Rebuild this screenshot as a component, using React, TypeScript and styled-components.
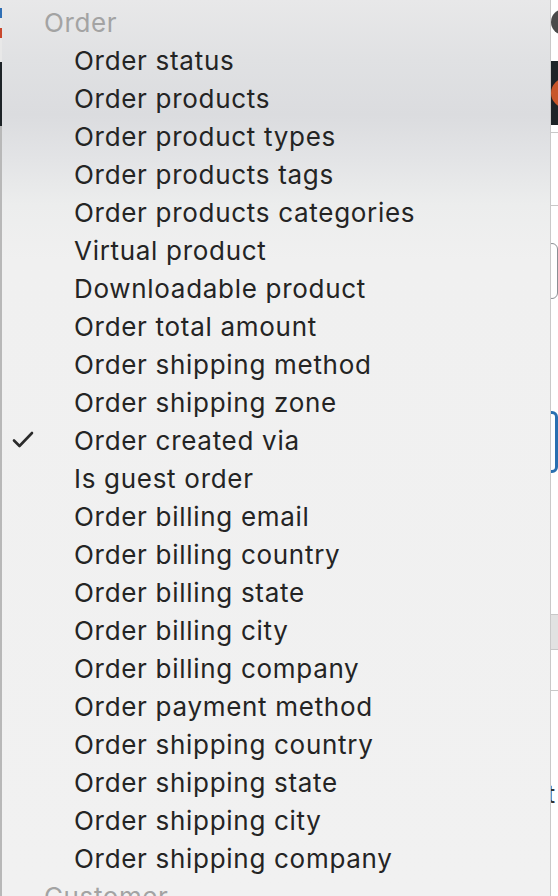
import React from 'react';
import styled, { createGlobalStyle } from 'styled-components';

const GlobalStyle = createGlobalStyle`
  html, body {
    margin: 0;
    padding: 0;
    background: #ffffff;
    overflow: hidden;
  }
`;

const Screen = styled.div`
  display: flex;
  width: 558px;
  height: 896px;
  overflow: hidden;
  font-family: Inter, "Noto Sans", "Liberation Sans", sans-serif;
`;

const LeftEdge = styled.div`
  width: 2px;
  flex: none;
  display: flex;
  flex-direction: column;
  background: #b8b8b8;
`;

const EdgeBit = styled.div<{ h: number; color: string }>`
  height: ${({ h }) => h}px;
  background: ${({ color }) => color};
  flex: none;
`;

const Menu = styled.div`
  width: 549px;
  flex: none;
  display: flex;
  flex-direction: column;
  padding-top: 3px;
  box-sizing: border-box;
  border-right: 1px solid #c9c9c9;
  background: linear-gradient(
    180deg,
    #e8e8e9 0px,
    #e0e1e3 60px,
    #dbdcdf 115px,
    #e3e4e6 160px,
    #eceded 205px,
    #f0f0f0 260px,
    #f1f1f1 100%
  );
`;

const GroupLabel = styled.div`
  height: 38px;
  display: flex;
  align-items: center;
  padding-left: 42px;
  font-size: 26px;
  letter-spacing: 0.6px;
  color: #a3a3a3;
  flex: none;
  white-space: nowrap;
`;

const Option = styled.div`
  height: 38px;
  display: flex;
  align-items: center;
  flex: none;
  font-size: 26px;
  letter-spacing: 0.7px;
  color: #242424;
  white-space: nowrap;
`;

const CheckSlot = styled.div`
  width: 72px;
  display: flex;
  justify-content: flex-start;
  padding-left: 10px;
  box-sizing: border-box;
  flex: none;
`;

const RightEdge = styled.div`
  flex: 1;
  display: flex;
  flex-direction: column;
  background: #ffffff;
  overflow: hidden;
`;

const Dot = styled.div`
  width: 26px;
  height: 26px;
  margin-top: 9px;
  border-radius: 50%;
  background: #4a4a4a;
  flex: none;
`;

const AdminBar = styled.div`
  height: 64px;
  margin-top: 26px;
  background: #1d2327;
  display: flex;
  align-items: center;
  flex: none;
`;

const Avatar = styled.div`
  width: 30px;
  height: 30px;
  border-radius: 50%;
  background: #c8562a;
  flex: none;
`;

const Rule = styled.div<{ mt: number }>`
  height: 1px;
  margin-top: ${({ mt }) => mt}px;
  background: #c8c8c8;
  flex: none;
`;

const Field = styled.div<{ mt: number; h: number; focus?: boolean }>`
  height: ${({ h }) => h}px;
  margin-top: ${({ mt }) => mt}px;
  width: 12px;
  margin-left: -5px;
  box-sizing: border-box;
  border: ${({ focus }) => (focus ? '3px solid #2a6fb0' : '1px solid #8c8f94')};
  border-radius: 6px;
  flex: none;
`;

const Band = styled.div`
  height: 34px;
  margin-top: 141px;
  background: #e2e2e2;
  border-top: 1px solid #c8c8c8;
  border-bottom: 1px solid #c8c8c8;
  flex: none;
`;

const Glyph = styled.div`
  margin-top: 88px;
  margin-left: -4px;
  font-size: 25px;
  color: #333;
  line-height: 30px;
  flex: none;
`;

const Check = () => (
  <svg width="22" height="18" viewBox="0 0 22 18">
    <path d="M2 9.5 L7.5 15 L20 2" fill="none" stroke="#2b2b2b" strokeWidth="2.6" strokeLinecap="round" strokeLinejoin="round" />
  </svg>
);

const options = [
  'Order status',
  'Order products',
  'Order product types',
  'Order products tags',
  'Order products categories',
  'Virtual product',
  'Downloadable product',
  'Order total amount',
  'Order shipping method',
  'Order shipping zone',
  'Order created via',
  'Is guest order',
  'Order billing email',
  'Order billing country',
  'Order billing state',
  'Order billing city',
  'Order billing company',
  'Order payment method',
  'Order shipping country',
  'Order shipping state',
  'Order shipping city',
  'Order shipping company',
];

const selected = 'Order created via';

const App: React.FC = () => {
  return (
    <>
      <GlobalStyle />
      <Screen>
        <LeftEdge>
          <EdgeBit h={8} color="#e8e8e8" />
          <EdgeBit h={10} color="#2f6fb5" />
          <EdgeBit h={10} color="#e8e8e8" />
          <EdgeBit h={10} color="#c9472c" />
          <EdgeBit h={24} color="#e8e8e8" />
          <EdgeBit h={64} color="#1d2327" />
        </LeftEdge>
        <Menu>
          <GroupLabel>Order</GroupLabel>
          {options.map((label) => (
            <Option key={label}>
              <CheckSlot>{label === selected && <Check />}</CheckSlot>
              {label}
            </Option>
          ))}
          <GroupLabel>Customer</GroupLabel>
        </Menu>
        <RightEdge>
          <Dot />
          <AdminBar>
            <Avatar />
          </AdminBar>
          <Rule mt={7} />
          <Rule mt={72} />
          <Field mt={37} h={56} />
          <Field mt={112} h={62} focus />
          <Band />
          <Rule mt={40} />
          <Glyph>t</Glyph>
        </RightEdge>
      </Screen>
    </>
  );
};

export default App;
